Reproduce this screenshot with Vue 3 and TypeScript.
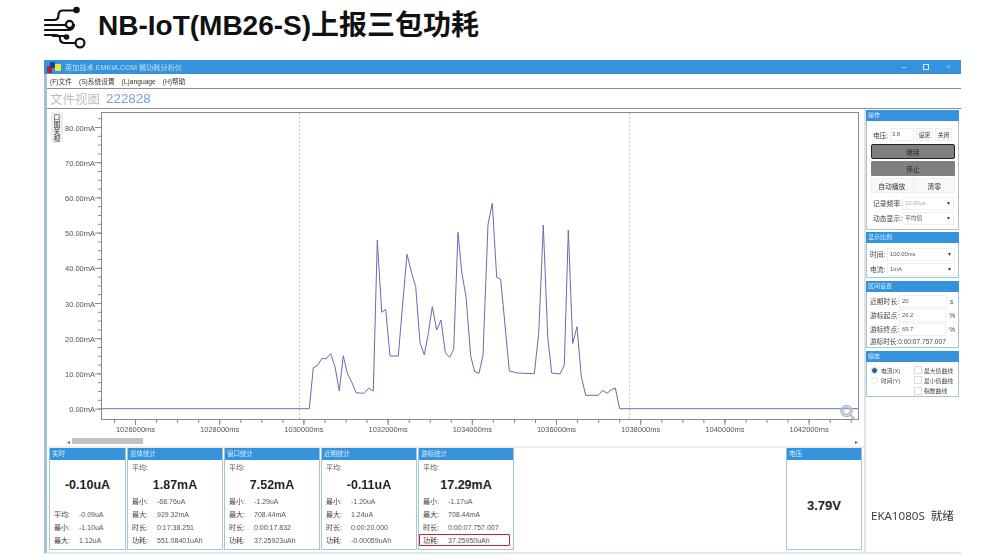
<script setup lang="ts">
const points: number[][] = [[101,408.7],[309.3,408.7],[313.3,367.7],[317.3,365.7],[322,358.3],[326,359],[330.7,353.7],[335,366.7],[339.3,391],[343.3,355.7],[347.3,373.3],[352,382.7],[356,392.7],[364,393.3],[368.7,388.3],[373.3,391],[377.3,240],[381.7,312.3],[385.7,309.3],[390,356],[398.3,356],[402.5,306],[407,254.3],[411.7,273.3],[415.7,286.7],[420,342.7],[424.3,355],[428.3,333.3],[432.3,306.7],[436.7,330],[441,320],[445.3,352.7],[449.7,357.3],[453.7,349.3],[458,232.3],[461.7,271.7],[466,296.7],[470.7,356],[474.7,371.7],[479,373.3],[483,355],[488,224.3],[492.3,203.3],[496.7,277.3],[500.7,279.3],[509.3,371],[517.3,373],[534.3,373.7],[538.7,333.3],[540.3,296.7],[543.3,225],[547.7,336.7],[551.7,373],[560,374],[564.3,365],[568.3,230],[572.7,343.3],[577,326.7],[581.3,376.7],[585.7,395.3],[598.3,395.3],[602.7,390.3],[607,393.3],[611,390],[615.3,388],[619.7,408.7],[858,408.7]]
const line = points.map((p) => p.join(',')).join(' ')

const yLabels = [80, 70, 60, 50, 40, 30, 20, 10, 0].map((v, i) => ({
  text: v.toFixed(2) + 'mA',
  y: 127.5 + i * 35.2,
}))
const yMinor = Array.from({ length: 34 }, (_, i) => 118.7 + i * 8.8)
const xLabels = [1026, 1028, 1030, 1032, 1034, 1036, 1038, 1040, 1042].map((v, i) => ({
  text: v + '000ms',
  x: 135.5 + i * 84.2,
}))
const xMinor = Array.from({ length: 37 }, (_, i) => 114.5 + i * 21.05)

interface Stat {
  title: string
  width: number
  value: string
  avg?: boolean
  rows: [string, string][]
  mark?: boolean
}
const stats: Stat[] = [
  { title: '实时', width: 77, value: '-0.10uA', rows: [['平均:', '-0.09uA'], ['最小:', '-1.10uA'], ['最大:', '1.12uA']] },
  { title: '总体统计', width: 96, value: '1.87mA', avg: true, rows: [['最小:', '-68.76uA'], ['最大:', '929.32mA'], ['时长:', '0:17:38.251'], ['功耗:', '551.08401uAh']] },
  { title: '窗口统计', width: 96, value: '7.52mA', avg: true, rows: [['最小:', '-1.29uA'], ['最大:', '708.44mA'], ['时长:', '0:00:17.832'], ['功耗:', '37.25923uAh']] },
  { title: '近期统计', width: 96, value: '-0.11uA', avg: true, rows: [['最小:', '-1.20uA'], ['最大:', '1.24uA'], ['时长:', '0:00:20.000'], ['功耗:', '-0.00059uAh']] },
  { title: '游标统计', width: 96, value: '17.29mA', avg: true, mark: true, rows: [['最小:', '-1.17uA'], ['最大:', '708.44mA'], ['时长:', '0:00:07.757.007'], ['功耗:', '37.25950uAh']] },
]
const menus = ['(F)文件', '(S)系统设置', '(L)anguage', '(H)帮助']
const ranges = [
  { label: '近期时长:', value: '20', unit: 's' },
  { label: '游标起点:', value: '26.2', unit: '%' },
  { label: '游标终点:', value: '69.7', unit: '%' },
]
</script>

<template>
  <div class="page">
    <header class="head">
      <svg class="logo" viewBox="44 6 44 44" width="44" height="44">
        <g fill="none" stroke="#111" stroke-width="2.200" stroke-linecap="round">
          <path d="M45 20 H54 Q58.500 20 58.500 15 Q58.500 10.500 63 10.500 H76" />
          <path d="M45 25 H65" />
          <path d="M45 30 H68 Q73 30 74 25" />
          <path d="M45 35 H55 Q60 35 60 38.500 Q60 43 65 43 H75" />
          <path d="M53 36 H66" />
          <circle cx="69.500" cy="24.500" r="3.600" />
          <circle cx="80" cy="43" r="4.400" />
        </g>
        <circle cx="76.500" cy="10" r="3.300" fill="#111" />
        <circle cx="66.500" cy="37" r="2.800" fill="#111" />
      </svg>
      <h1 class="title">NB-IoT(MB26-S)上报三包功耗</h1>
    </header>

    <section class="win">
      <div class="titlebar">
        <svg width="15" height="12" viewBox="0 0 15 12" class="appicon">
          <rect x="0" y="5" width="5" height="7" fill="#b8202c" />
          <rect x="3" y="1" width="5" height="6" fill="#24408c" />
          <rect x="8" y="3" width="6" height="7" fill="#e9e63c" />
        </svg>
        <span class="apptitle">英加技术 EMKIA.COM 微功耗分析仪</span>
        <div class="winbtns">
          <span class="wmin"></span>
          <span class="wmax"></span>
          <span class="wclose">×</span>
        </div>
      </div>
      <nav class="menu">
        <span v-for="m in menus" :key="m">{{ m }}</span>
      </nav>
      <div class="fileview">
        <span class="fv1">文件视图</span>
        <span class="fv2">222828</span>
      </div>

      <div class="body">
        <div class="main">
          <div class="chartwrap">
            <svg class="chart" viewBox="47 109 817 327" width="817" height="327">
              <rect x="101.500" y="112.500" width="757" height="307" fill="#fff" stroke="#8a8a8a" />
              <g stroke="#8a8a8a">
                <line v-for="y in yMinor" :key="y" x1="98" :y1="y" x2="101" :y2="y" />
                <line v-for="l in yLabels" :key="l.y" x1="95" :y1="l.y" x2="101" :y2="l.y" />
                <line v-for="x in xMinor" :key="x" :x1="x" y1="420" :x2="x" y2="423" />
                <line v-for="l in xLabels" :key="l.x" :x1="l.x" y1="420" :x2="l.x" y2="425" />
              </g>
              <g class="axis" text-anchor="end">
                <text v-for="l in yLabels" :key="l.text" x="95" :y="l.y + 3">{{ l.text }}</text>
              </g>
              <g class="axis" text-anchor="middle">
                <text v-for="l in xLabels" :key="l.text" :x="l.x" y="432">{{ l.text }}</text>
              </g>
              <line x1="299.500" y1="113" x2="299.500" y2="419" class="cursor" />
              <line x1="629.500" y1="113" x2="629.500" y2="419" class="cursor" />
              <polyline :points="line" fill="none" stroke="#6a6ab4" stroke-width="1" />
              <g fill="none" stroke="#a9bcc6" stroke-width="1.400">
                <circle cx="846.500" cy="411" r="5.500" />
                <circle cx="846.500" cy="411" r="3.500" />
                <path d="M850.500 415 L855 420" stroke-width="2" />
              </g>
            </svg>
            <div class="sidetab">口图关视</div>
          </div>
          <div class="scroll">
            <span class="arr">◂</span>
            <span class="thumb"></span>
            <span class="arr right">▸</span>
          </div>
          <div class="stats">
            <article v-for="s in stats" :key="s.title" class="panel" :style="{ width: s.width + 'px' }">
              <h3 class="phead">{{ s.title }}</h3>
              <div class="pavg">{{ s.avg ? '平均:' : '' }}</div>
              <div class="pval" :class="{ first: !s.avg }">{{ s.value }}</div>
              <div
                v-for="(r, i) in s.rows"
                :key="r[0]"
                class="prow"
                :class="{ marked: s.mark && i === 3 }"
              >
                <span class="plabel">{{ r[0] }}</span><span>{{ r[1] }}</span>
              </div>
            </article>
            <article class="panel volt">
              <h3 class="phead">电压</h3>
              <div class="voltval">3.79V</div>
            </article>
          </div>
        </div>

        <aside class="side">
          <section class="box ops">
            <h3 class="phead">操作</h3>
            <div class="inner">
              <div class="voltrow">
                <label>电压:</label><span class="field v">3.8</span>
                <button class="lite small">设定</button><button class="lite small">关闭</button>
              </div>
              <button class="dark active">继续</button>
              <button class="dark">停止</button>
              <div class="pair">
                <button class="lite">自动播放</button><button class="lite">清零</button>
              </div>
              <div class="selrow"><label>记录频率:</label><span class="field sel off">10.00us<i>▾</i></span></div>
              <div class="selrow"><label>动态显示:</label><span class="field sel">平均值<i>▾</i></span></div>
            </div>
          </section>

          <section class="box scale">
            <h3 class="phead">显示比例</h3>
            <div class="inner">
              <div class="selrow"><label>时间:</label><span class="field sel grow">100.00ms<i>▾</i></span></div>
              <div class="selrow"><label>电流:</label><span class="field sel grow">1mA<i>▾</i></span></div>
            </div>
          </section>

          <section class="box range">
            <h3 class="phead">区间设置</h3>
            <div class="inner">
              <div v-for="r in ranges" :key="r.label" class="rrow">
                <label>{{ r.label }}</label><span class="field rf">{{ r.value }}</span><span class="unit">{{ r.unit }}</span>
              </div>
              <div class="rlast">游标时长:0:00:07.757.007</div>
            </div>
          </section>

          <section class="box zoom">
            <h3 class="phead">缩放</h3>
            <div class="zgrid">
              <div class="zcol">
                <div class="zitem"><span class="radio on"></span>电流(X)</div>
                <div class="zitem"><span class="radio"></span>时间(Y)</div>
              </div>
              <div class="zcol">
                <div class="zitem"><span class="check"></span>最大值曲线</div>
                <div class="zitem"><span class="check"></span>最小值曲线</div>
                <div class="zitem"><span class="check"></span>指数曲线</div>
              </div>
            </div>
          </section>

          <div class="status">EKA1080S&nbsp; 就绪</div>
        </aside>
      </div>
    </section>
  </div>
</template>

<style>
html, body { margin: 0; background: #fff; }
</style>

<style scoped>
.page {
  width: 1003px;
  height: 560px;
  overflow: hidden;
  background: #fff;
  font-family: "Liberation Sans", "Noto Sans CJK SC", sans-serif;
  color: #444;
}
.head {
  height: 60px;
  display: flex;
  align-items: flex-start;
  padding: 0 0 0 44px;
  box-sizing: border-box;
}
.logo { margin-top: 6px; flex: none; }
.title {
  margin: 9px 0 0 10px;
  font-size: 28px;
  line-height: 34px;
  font-weight: 700;
  color: #111;
  white-space: nowrap;
}
.win {
  width: 917px;
  height: 494px;
  margin-left: 44px;
  display: flex;
  flex-direction: column;
  box-sizing: border-box;
  border-left: 3px solid #a3c0d2;
  border-bottom: 2px solid #dfe8f2;
  filter: blur(0.35px);
}
.titlebar {
  height: 14px;
  margin-left: -3px;
  background: #3592dc;
  display: flex;
  align-items: center;
  padding-left: 3px;
  flex: none;
}
.appicon { flex: none; }
.apptitle { margin-left: 3px; font-size: 7.200px; color: #bfe0f6; white-space: nowrap; }
.winbtns { margin-left: auto; display: flex; align-items: center; gap: 17px; padding-right: 10px; }
.wmin { width: 4px; height: 1px; background: #9ccdf0; }
.wmax { width: 4px; height: 4px; border: 1px solid #d7ecfa; }
.wclose { font-size: 8px; line-height: 8px; color: #9ccdf0; }
.menu {
  height: 14px;
  display: flex;
  align-items: center;
  gap: 7px;
  padding-left: 3px;
  font-size: 6.700px;
  color: #333;
  border-bottom: 1px solid #8c8c8c;
  flex: none;
}
.fileview {
  height: 19px;
  display: flex;
  align-items: center;
  gap: 6px;
  padding-left: 3px;
  font-size: 12.500px;
  border-bottom: 1px solid #8c8c8c;
  flex: none;
}
.fv1 { color: #bdbdbd; }
.fv2 { color: #7ba2c9; font-size: 13.400px; }
.body { flex: 1; display: flex; min-height: 0; }
.main { width: 817px; display: flex; flex-direction: column; flex: none; }
.chartwrap { position: relative; height: 327px; flex: none; }
.chart { display: block; }
.axis { font-size: 7.500px; fill: #555; }
.cursor { stroke: #d2c99c; stroke-dasharray: 2 2; }
.sidetab {
  position: absolute;
  left: 4px;
  top: 3px;
  width: 12px;
  height: 30px;
  background: #eeeeee;
  font-size: 6.800px;
  line-height: 7px;
  color: #333;
  text-align: center;
  box-sizing: border-box;
  padding: 2px 2px;
}
.scroll {
  height: 12px;
  display: flex;
  align-items: center;
  padding-left: 20px;
  box-sizing: border-box;
  flex: none;
  border-bottom: 2px solid #eceff2;
}
.arr { font-size: 6px; color: #666; width: 5px; }
.arr.right { margin-left: auto; margin-right: 4px; }
.thumb { width: 71px; height: 6px; background: #c2c2c2; margin-left: 0; }
.stats { display: flex; gap: 1px; padding-left: 2px; height: 102px; }
.panel {
  box-sizing: border-box;
  border: 1px solid #a3c6d6;
  border-top: 0;
  background: #fff;
  position: relative;
}
.phead {
  margin: 0;
  height: 12px;
  line-height: 12px;
  background: #3592dc;
  color: #d7ecfa;
  font-size: 6.500px;
  font-weight: 400;
  padding-left: 2px;
  white-space: nowrap;
}
.pavg { height: 14px; margin-top: 1px; padding-left: 4px; font-size: 7px; line-height: 14px; color: #555; }
.pval {
  height: 20px;
  line-height: 20px;
  text-align: center;
  font-size: 12.500px;
  font-weight: 700;
  color: #222;
  margin-bottom: -0.500px;
}
.pval.first { margin-bottom: 12.500px; }
.prow {
  height: 13.300px;
  line-height: 13.300px;
  font-size: 7px;
  color: #555;
  padding-left: 4px;
  white-space: nowrap;
  display: flex;
}
.plabel { width: 25px; flex: none; color: #444; }
.marked { position: relative; }
.marked::after {
  content: "";
  position: absolute;
  left: 0;
  right: 3px;
  top: 0;
  height: 12px;
  box-sizing: border-box;
  border: 1.500px solid #c8202a;
  border-radius: 1px;
}
.volt { width: 76px; margin-left: auto; margin-right: 2px; display: flex; flex-direction: column; height: 102px; }
.voltval {
  flex: 1;
  display: flex;
  align-items: center;
  justify-content: center;
  font-size: 13px;
  font-weight: 700;
  color: #222;
  padding-top: 2px;
}
.side {
  flex: 1;
  border-left: 2px solid #dfe3e6;
  display: flex;
  flex-direction: column;
  padding-top: 1px;
  min-width: 0;
}
.box {
  width: 93px;
  box-sizing: border-box;
  border: 1px solid #a3c6d6;
  border-top: 0;
  font-size: 6.800px;
  color: #444;
  margin-bottom: 3px;
}
.box .phead { margin: 0 -1px; font-size: 6px; height: 11px; line-height: 11px; }
.field {
  display: inline-block;
  box-sizing: border-box;
  border: 1px solid #efefef;
  font-size: 5.800px;
  color: #555;
  background: #fff;
}
button {
  font-family: inherit;
  display: block;
  padding: 0;
  border: 1px solid #eee;
  background: #f8f8f8;
  color: #333;
}
.ops { height: 120px; }
.ops .inner { padding: 7px 3px 0 4px; }
.voltrow { display: flex; align-items: center; height: 13px; padding-left: 2px; }
.voltrow label { width: 17px; flex: none; }
.field.v { width: 24px; height: 13px; line-height: 11px; padding-left: 1px; }
.small { width: 17px; height: 13px; font-size: 5.800px; margin-left: 2px; }
.dark {
  width: 84px;
  height: 15px;
  margin-top: 2px;
  background: #7f7f7f;
  border: 1px solid #7f7f7f;
  font-size: 6.800px;
  color: #222;
  border-radius: 1px;
}
.dark.active { border: 1.500px solid #222; border-radius: 2px; margin-top: 3px; }
.pair { display: flex; gap: 1px; margin-top: 2px; }
.pair button { width: 41.500px; height: 15px; font-size: 6.800px; }
.selrow { display: flex; align-items: center; height: 14px; margin-top: 1px; padding-left: 2px; white-space: nowrap; }
.pair + .selrow { margin-top: 3px; }
.ops .selrow label { width: 29px; flex: none; }
.sel {
  position: relative;
  width: 52px;
  height: 13px;
  line-height: 11px;
  padding-left: 2px;
}
.sel i { position: absolute; right: 3px; top: 0; font-style: normal; font-size: 6px; color: #444; }
.sel.off { color: #aaa; }
.scale { height: 46px; margin-top: -1px; }
.scale .inner { padding: 3px 3px 0 3px; }
.scale .selrow { margin-top: 1px; padding-left: 0; height: 14px; }
.scale .selrow label { width: 17px; flex: none; }
.sel.grow { width: 68px; }
.range { height: 67px; }
.range .inner { padding: 2px 3px 0 3px; }
.rrow { display: flex; align-items: center; height: 14px; white-space: nowrap; }
.rrow label { width: 29px; flex: none; }
.rf { width: 48px; height: 13px; line-height: 11px; padding-left: 2px; }
.unit { margin-left: 3px; font-size: 6.500px; }
.rlast { font-size: 6.600px; line-height: 11px; white-space: nowrap; }
.zoom { height: 46px; }
.zgrid { display: flex; padding: 3px 0 0 4px; gap: 14px; font-size: 5.800px; }
.zcol { display: flex; flex-direction: column; }
.zcol:first-child { width: 29px; }
.zitem { display: flex; align-items: center; height: 10.300px; white-space: nowrap; gap: 3px; }
.radio {
  width: 7px;
  height: 7px;
  box-sizing: border-box;
  border-radius: 50%;
  border: 1px solid #e4e4e4;
  flex: none;
  background: #fff;
}
.radio.on { border: 1.500px solid #e2e8ee; background: #24609c; }
.check { width: 8px; height: 8px; box-sizing: border-box; border: 1px solid #dcdcdc; flex: none; margin-right: -1px; }
.status {
  margin-top: auto;
  margin-bottom: 29px;
  padding-left: 5px;
  font-size: 11.600px;
  line-height: 15px;
  color: #333;
  white-space: nowrap;
  font-family: "Open Sans", "Noto Sans CJK SC", sans-serif;
}
</style>
